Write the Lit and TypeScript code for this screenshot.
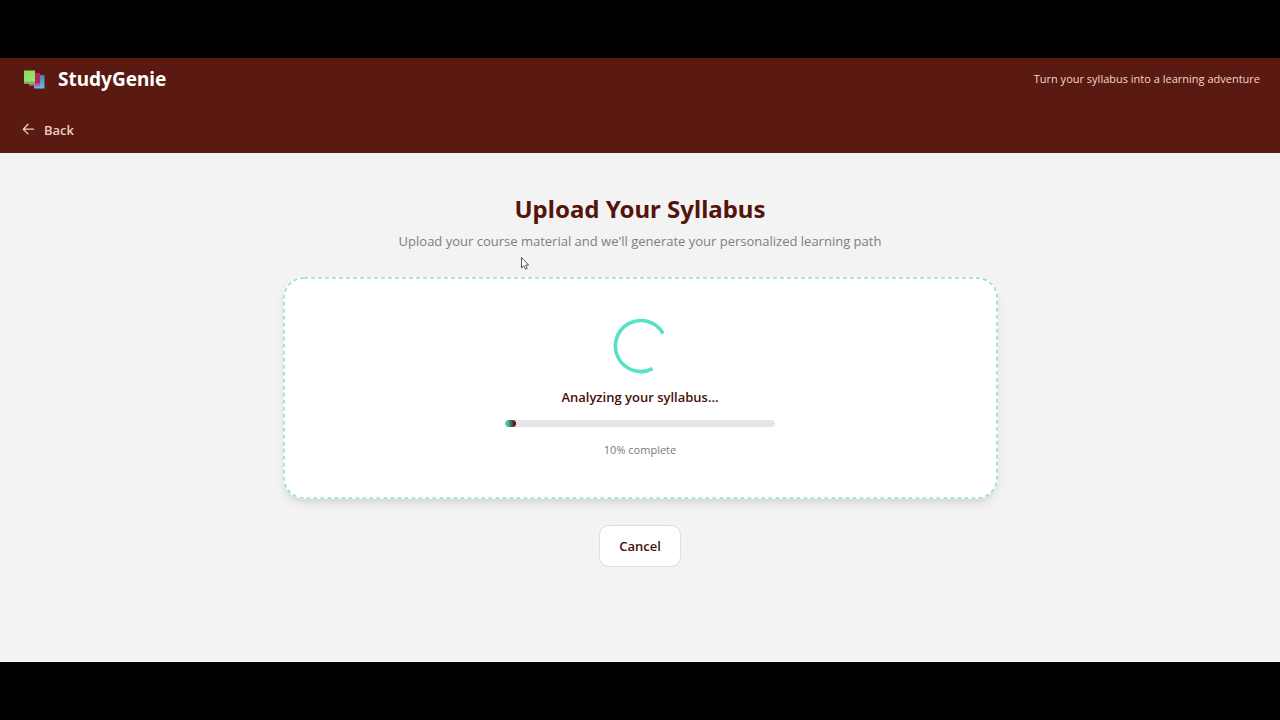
import { LitElement, html, css, svg } from "lit";
import { customElement, property } from "lit/decorators.js";

@customElement("upload-progress")
class UploadProgress extends LitElement {
  @property({ type: Number }) percent = 0;

  static styles = css`
    :host {
      display: block;
    }
    .card {
      position: relative;
      box-sizing: border-box;
      display: flex;
      flex-direction: column;
      align-items: center;
      padding: 41px 32px 39px;
      background: #fff;
      border-radius: 21px;
      box-shadow: 0 6px 12px -3px rgba(0, 0, 0, 0.12), 0 3px 6px -3px rgba(0, 0, 0, 0.08);
    }
    .outline {
      position: absolute;
      inset: 0;
      width: 100%;
      height: 100%;
      overflow: visible;
    }
    .outline rect {
      x: 1px;
      y: 1px;
      width: calc(100% - 2px);
      height: calc(100% - 2px);
      fill: none;
      stroke: #9bded0;
      stroke-width: 1.7;
      stroke-dasharray: 4 3;
    }
    .spinner {
      display: block;
      width: 56px;
      height: 56px;
    }
    .status {
      margin: 12px 0 0;
      font-size: 13px;
      line-height: 22px;
      font-weight: 600;
      color: #451008;
    }
    .track {
      width: 100%;
      max-width: 270px;
      height: 7px;
      margin-top: 12px;
      border-radius: 4px;
      background: #e5e5e8;
      overflow: hidden;
    }
    .fill {
      height: 100%;
      border-radius: 4px;
      background: linear-gradient(90deg, #4ecda8 20%, #3a7c69 50%, #561a10 85%);
    }
    .percent {
      margin: 13px 0 0;
      font-size: 11px;
      line-height: 20px;
      color: #767b80;
    }
  `;

  render() {
    return html`
      <section class="card" aria-busy="true">
        <svg class="outline" aria-hidden="true"><rect rx="20" /></svg>
        <svg class="spinner" viewBox="0 0 56 56" aria-hidden="true">
          <path d="M51.1 15.5A25.5 25.5 0 1 0 40.6 50.7" fill="none" stroke="#55e3c4" stroke-width="3.6" />
        </svg>
        <p class="status">Analyzing your syllabus...</p>
        <div
          class="track"
          role="progressbar"
          aria-label="Analysis progress"
          aria-valuemin="0"
          aria-valuemax="100"
          aria-valuenow=${this.percent}
        >
          <div class="fill" style="width:${this.percent * 0.4}%"></div>
        </div>
        <p class="percent">${this.percent}% complete</p>
      </section>
    `;
  }
}

const logo = svg`
  <defs>
    <linearGradient id="green" x1="0" y1="0" x2="1" y2="1"><stop stop-color="#82d95c" /><stop offset="1" stop-color="#a0e878" /></linearGradient>
    <linearGradient id="blue" x1="0" y1="0" x2="0" y2="1"><stop stop-color="#4a83ad" /><stop offset="1" stop-color="#62bfe8" /></linearGradient>
  </defs>
  <path d="M10 6h10.5v13.5H10z" fill="url(#blue)" />
  <path d="M5 4h11v12.5H5z" fill="#ae285c" />
  <path d="M5 14.5h11v2H5z" fill="#d5549a" />
  <path d="M0 1.5h11v13H0z" fill="url(#green)" />
  <path d="M0 12.5h11v2H0z" fill="#75b968" />
`;

@customElement("app-root")
class AppRoot extends LitElement {
  static styles = css`
    :host {
      display: flex;
      flex-direction: column;
      box-sizing: border-box;
      min-height: 100vh;
      padding: 58px 0;
      background: #000;
      font-family: "Open Sans", "Noto Sans", sans-serif;
    }
    header {
      padding: 0 20px;
      background: #5a1a11;
    }
    .bar {
      display: flex;
      align-items: center;
      justify-content: space-between;
      height: 42px;
    }
    .brand {
      display: flex;
      align-items: center;
      gap: 13px;
      padding-left: 4px;
      color: #fff;
      font-family: "Noto Sans", "Open Sans", sans-serif;
      font-size: 19px;
      line-height: 28px;
      font-weight: 700;
      text-decoration: none;
    }
    .logo {
      width: 21px;
      height: 20px;
    }
    .tagline {
      font-size: 11px;
      line-height: 20px;
      color: #f5d5cc;
    }
    .nav {
      display: flex;
      align-items: center;
      padding: 20px 0 13px;
    }
    button {
      font: inherit;
      cursor: pointer;
    }
    .back {
      display: flex;
      align-items: center;
      gap: 8px;
      padding: 0;
      border: 0;
      background: none;
      color: #eecdc5;
      font-size: 13px;
      line-height: 20px;
      font-weight: 600;
    }
    .arrow {
      width: 16px;
      height: 16px;
    }
    main {
      flex: 1;
      display: flex;
      flex-direction: column;
      align-items: center;
      padding: 37px 20px;
      background: #f3f3f3;
    }
    h1 {
      margin: 0;
      font-family: "Noto Sans", "Open Sans", sans-serif;
      font-size: 24px;
      line-height: 38px;
      font-weight: 700;
      color: #54140c;
    }
    .lead {
      margin: 2px 0 25px;
      font-size: 13px;
      line-height: 22px;
      color: #7b8083;
    }
    upload-progress {
      width: 100%;
      max-width: 715px;
    }
    .cancel {
      margin-top: 26px;
      padding: 10px 19px;
      border: 1px solid #dedede;
      border-radius: 10px;
      background: #fff;
      color: #451008;
      font-size: 13px;
      line-height: 20px;
      font-weight: 600;
    }
    .pointer {
      position: absolute;
      left: 520px;
      top: 256px;
      width: 9px;
      height: 14px;
    }
  `;

  render() {
    return html`
      <header>
        <div class="bar">
          <a class="brand" href="#">
            <svg class="logo" viewBox="0 0 21 20" aria-hidden="true">${logo}</svg>
            StudyGenie
          </a>
          <span class="tagline">Turn your syllabus into a learning adventure</span>
        </div>
        <nav class="nav">
          <button class="back" type="button">
            <svg class="arrow" viewBox="0 0 16 16" fill="none" stroke="currentColor" stroke-width="1.3" stroke-linecap="round" stroke-linejoin="round" aria-hidden="true">
              <path d="M13.5 7.2H3.3M8 2.3L3.3 7.2L8 11.9" />
            </svg>
            Back
          </button>
        </nav>
      </header>
      <main>
        <h1>Upload Your Syllabus</h1>
        <p class="lead">Upload your course material and we'll generate your personalized learning path</p>
        <upload-progress .percent=${10}></upload-progress>
        <button class="cancel" type="button">Cancel</button>
      </main>
      <svg class="pointer" viewBox="0 0 9 14" aria-hidden="true">
        <path d="M1.5 1.5V12L3.8 9.8L5.4 13.2L7.2 12.4L5.6 9.1H8.6Z" fill="#fff" stroke="#444" stroke-width="0.9" />
      </svg>
    `;
  }
}
